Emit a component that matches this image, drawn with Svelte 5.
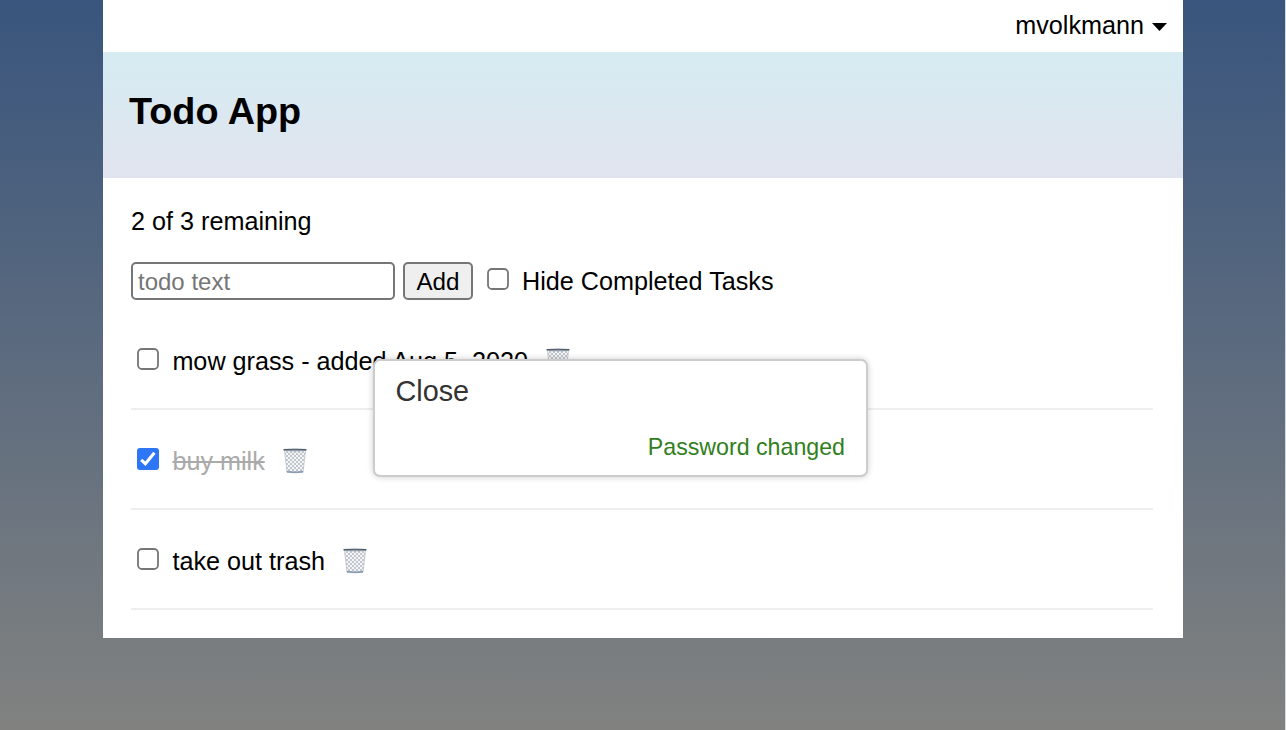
<script>
  const todos = [
    { text: 'mow grass - added Aug 5, 2020', done: false },
    { text: 'buy milk', done: true },
    { text: 'take out trash', done: false }
  ];
</script>

{#snippet trash()}
  <svg class="trash" width="24" height="26" viewBox="0 0 24 26">
    <defs>
      <pattern id="mesh" width="4" height="4" patternUnits="userSpaceOnUse">
        <rect width="4" height="4" fill="#f4f5f6" />
        <path d="M0 0L4 4M4 0L0 4" stroke="#abb3bb" stroke-width=".7" />
      </pattern>
    </defs>
    <path d="M1.4 2L4 24.2Q12 25.6 20 24.2L22.6 2Z" fill="url(#mesh)" stroke="#b4bcc4" stroke-width=".7" />
    <path d="M3.8 22.8Q12 24.2 20.2 22.8L20 24.4Q12 25.5 4 24.4Z" fill="#8c9cb2" />
    <path d="M.3 1.1Q12 .4 23.7 1.1L23.3 2.8Q12 3.8 .7 2.8Z" fill="#929da9" />
    <path d="M.8 1.6Q12 1 23.2 1.6" fill="none" stroke="#535e6b" stroke-width="1.1" />
  </svg>
{/snippet}

{#snippet check(on)}
  <svg class="check" width="22" height="22" viewBox="0 0 22 22" role="checkbox" aria-checked={on} aria-label="Completed" tabindex="0">
    {#if on}
      <rect width="22" height="22" rx="3" fill="#2d76f6" />
      <path d="M4.2 11.8L8.4 15.8L17.4 4.8" fill="none" stroke="#fff" stroke-width="3.1" />
    {:else}
      <rect x="1" y="1" width="20" height="20" rx="4" fill="#fff" stroke="#767676" stroke-width="1.8" />
    {/if}
  </svg>
{/snippet}

<div class="page">
  <main>
    <div class="account"><span>mvolkmann</span>
      <svg width="15" height="8" viewBox="0 0 15 8"><path d="M0 0H15L7.5 8Z" /></svg>
    </div>
    <header><h1>Todo App</h1></header>
    <section>
      <p class="remaining">2 of 3 remaining</p>
      <form onsubmit={(e) => e.preventDefault()}>
        <input placeholder="todo text" />
        <button>Add</button>
        <div class="hide">{@render check(false)}<span>Hide Completed Tasks</span></div>
      </form>
      <ul>
        {#each todos as todo}
          <li>
            {@render check(todo.done)}
            <span class="label" class:done={todo.done}>{todo.text}</span>
            {@render trash()}
          </li>
        {/each}
      </ul>
    </section>
    <div class="dialog">
      <div class="close">Close</div>
      <div class="message">Password changed</div>
    </div>
  </main>
</div>

<style>
  :global(body) { margin: 0; overflow: hidden; }
  .page {
    box-sizing: border-box;
    height: 730px;
    padding: 0 102px 0 103px;
    border-right: 1px solid #d5d8dc;
    background: linear-gradient(#39557d, #818280);
    font-family: "Liberation Sans", Arial, sans-serif;
    font-size: 25.2px;
    line-height: 30px;
    color: #000;
  }
  main { position: relative; width: 1080px; height: 638px; background: #fff; }
  .account {
    box-sizing: border-box;
    height: 52px;
    padding: 0 16px 2px 0;
    display: flex;
    align-items: center;
    justify-content: flex-end;
    gap: 8px;
  }
  .account svg { margin-top: 3px; }
  header {
    box-sizing: border-box;
    height: 126px;
    padding: 36px 26px;
    background: linear-gradient(#d6ecf2, #e1e4ef);
  }
  h1 { margin: 0; font-size: 37.8px; line-height: 46px; }
  section { padding: 28px 30px 0 28px; }
  .remaining { margin: 0; }
  form { display: flex; height: 38px; margin-top: 26px; }
  input {
    box-sizing: border-box;
    width: 264px;
    height: 38px;
    margin: 0;
    padding: 2px 5px 0;
    border: 2px solid #767676;
    border-radius: 5px;
    font: 24px "Liberation Sans", Arial, sans-serif;
    background: #fff;
  }
  input::placeholder { color: #757575; opacity: 1; }
  button {
    box-sizing: border-box;
    width: 70px;
    height: 38px;
    margin: 0 0 0 8px;
    padding: 2px 0 0;
    border: 2px solid #767676;
    border-radius: 5px;
    background: #efefef;
    color: #000;
    font: 24.2px "Liberation Sans", Arial, sans-serif;
  }
  .hide { display: flex; align-items: center; margin-left: 14px; gap: 13px; }
  .check { flex: none; margin-top: -4px; }
  ul { margin: 10px 0 0; padding: 0; list-style: none; }
  li {
    box-sizing: border-box;
    display: flex;
    align-items: center;
    height: 100px;
    padding: 4px 0 0 6px;
    border-bottom: 2px solid #eee;
  }
  .label { margin: 0 18px 0 13.4px; white-space: nowrap; }
  .done { color: #aaa; text-decoration: line-through; text-decoration-thickness: 2px; }
  .trash { flex: none; }
  .dialog {
    position: absolute;
    left: 270px;
    top: 359px;
    box-sizing: border-box;
    width: 495px;
    height: 118px;
    padding: 13px 21px 13px 20.5px;
    border: 2px solid #ccc;
    border-radius: 7px;
    background: #fff;
    box-shadow: 0 0 6px rgba(0, 0, 0, 0.2);
    color: #333;
  }
  .close { font-size: 28.8px; line-height: 34px; }
  .message { margin-top: 25px; font-size: 23.2px; line-height: 28px; text-align: right; color: #317e20; }
</style>
